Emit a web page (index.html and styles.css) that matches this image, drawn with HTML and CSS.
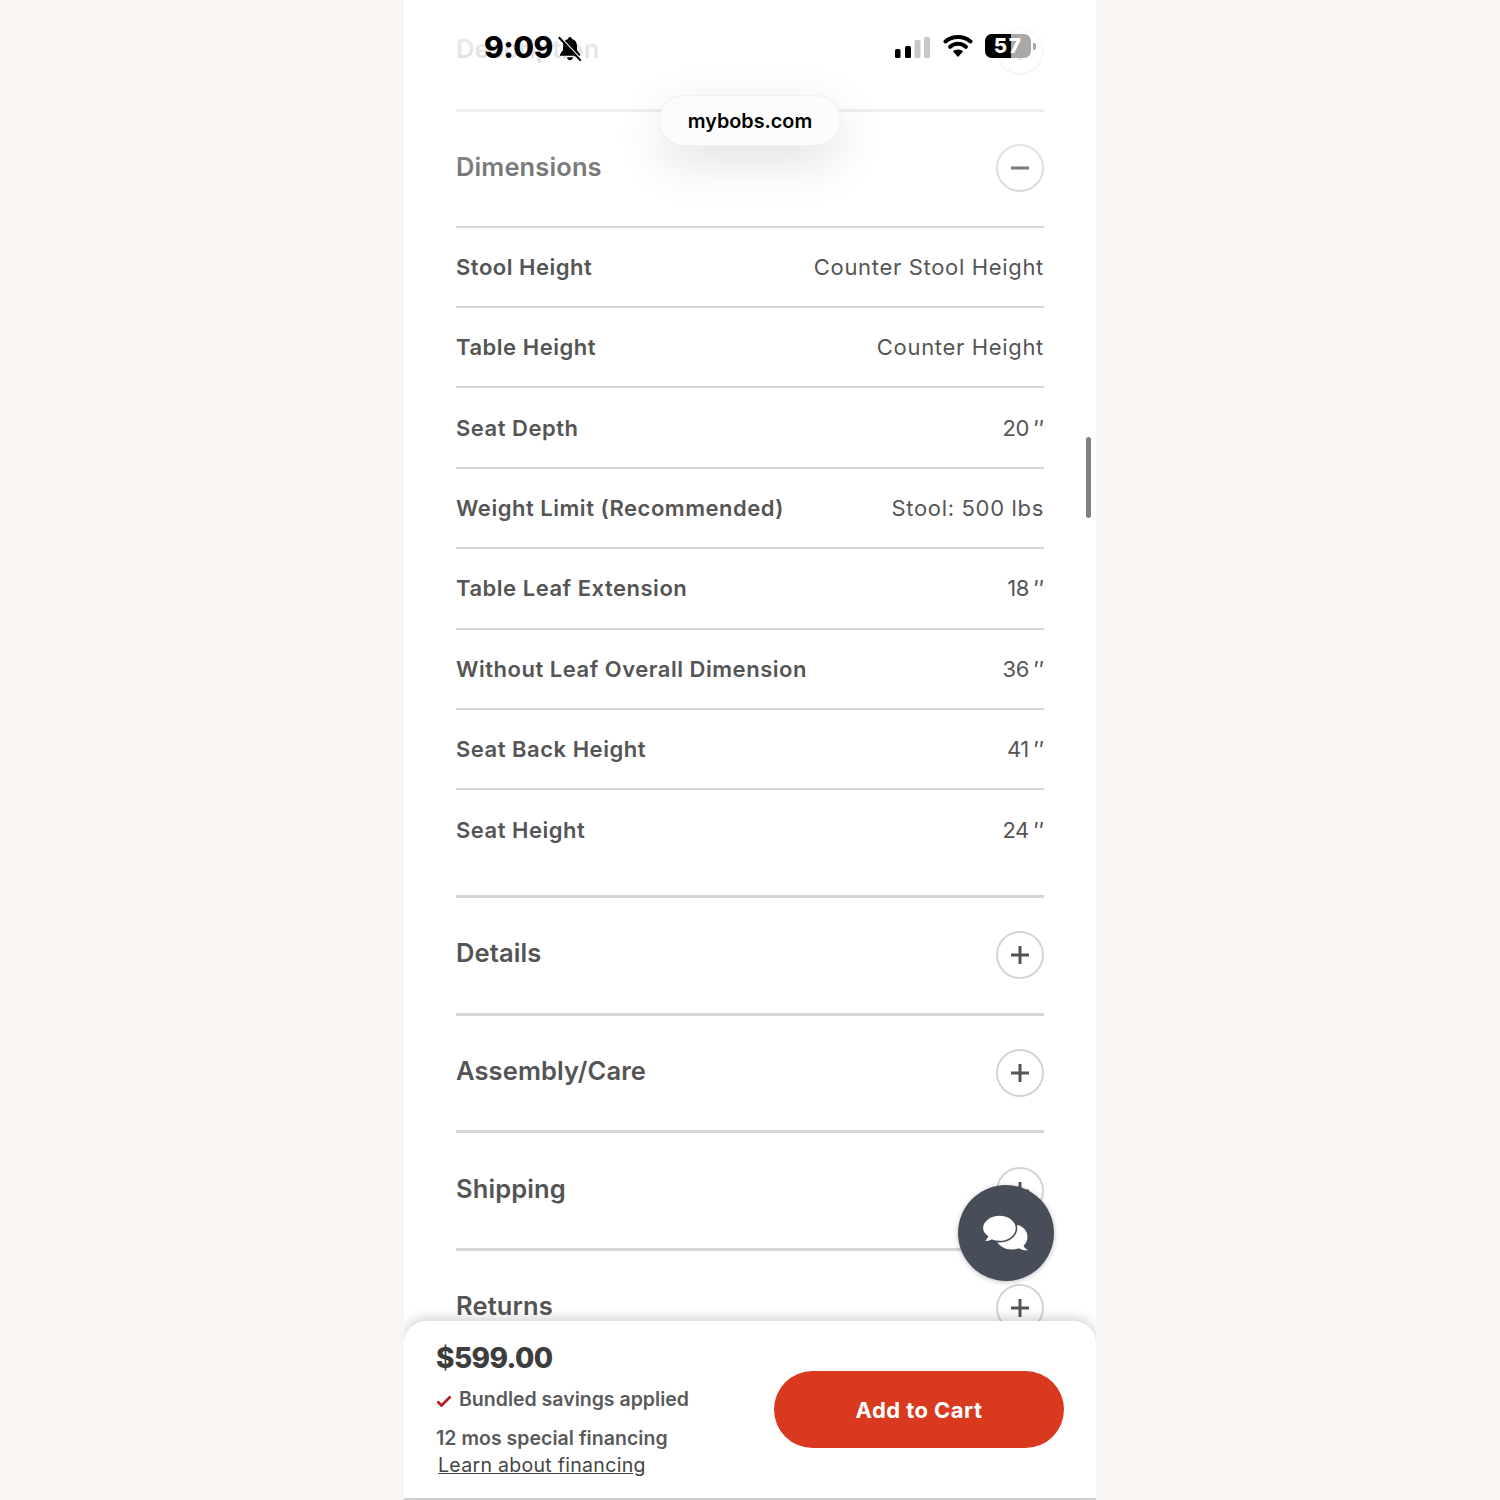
FILE: index.html
```html
<!DOCTYPE html>
<html lang="en">
<head>
<meta charset="utf-8">
<title>mybobs.com</title>
<link rel="stylesheet" href="styles.css">
</head>
<body>
<div class="phone">
  <main class="content">
    <section class="acc">
      <h2>Description</h2>
      <span class="circle"><svg viewBox="0 0 20 20"><path d="M10 1v18M1 10h18"/></svg></span>
    </section>
    <section class="acc open">
      <div class="acc-head">
        <h2>Dimensions</h2>
        <span class="circle"><svg viewBox="0 0 20 20"><path d="M1 10h18"/></svg></span>
      </div>
      <dl class="specs">
        <div class="spec"><dt>Stool Height</dt><dd>Counter Stool Height</dd></div>
        <div class="spec"><dt>Table Height</dt><dd>Counter Height</dd></div>
        <div class="spec"><dt>Seat Depth</dt><dd class="num">20<span class="q">''</span></dd></div>
        <div class="spec"><dt>Weight Limit (Recommended)</dt><dd>Stool: 500 lbs</dd></div>
        <div class="spec"><dt>Table Leaf Extension</dt><dd class="num">18<span class="q">''</span></dd></div>
        <div class="spec"><dt>Without Leaf Overall Dimension</dt><dd class="num">36<span class="q">''</span></dd></div>
        <div class="spec"><dt>Seat Back Height</dt><dd class="num">41<span class="q">''</span></dd></div>
        <div class="spec"><dt>Seat Height</dt><dd class="num">24<span class="q">''</span></dd></div>
      </dl>
    </section>
    <section class="acc">
      <h2>Details</h2>
      <span class="circle"><svg viewBox="0 0 20 20"><path d="M10 1v18M1 10h18"/></svg></span>
    </section>
    <section class="acc">
      <h2>Assembly/Care</h2>
      <span class="circle"><svg viewBox="0 0 20 20"><path d="M10 1v18M1 10h18"/></svg></span>
    </section>
    <section class="acc">
      <h2>Shipping</h2>
      <span class="circle"><svg viewBox="0 0 20 20"><path d="M10 1v18M1 10h18"/></svg></span>
    </section>
    <section class="acc">
      <h2>Returns</h2>
      <span class="circle"><svg viewBox="0 0 20 20"><path d="M10 1v18M1 10h18"/></svg></span>
    </section>
  </main>

  <div class="fade"></div>
  <div class="scrollbar"></div>

  <div class="status">
    <div class="status-left">
      <span class="time">9:09</span>
      <svg class="bell" viewBox="0 0 24 25">
        <path d="M12 1c1.100 0 1.900.8 1.900 1.900 3.500.9 5.100 3.600 5.100 7.300v3.900l3 4.100v1.600H2v-1.600l3-4.100v-3.900c0-3.700 1.600-6.400 5.100-7.300C10.100 1.800 10.900 1 12 1z"/>
        <path d="M9 21.300h6c-.2 1.700-1.400 2.900-3 2.900s-2.800-1.200-3-2.900z"/>
        <path class="bell-gap" d="M1.500 .5l22 23.500"/>
        <path class="bell-slash" d="M.8 1.200l22 23.500"/>
      </svg>
    </div>
    <div class="status-right">
      <svg class="signal" viewBox="0 0 35 21">
        <rect x="0" y="12" width="5.500" height="9" rx="1.500" fill="#000"/>
        <rect x="10" y="9" width="6" height="12" rx="1.500" fill="#000"/>
        <rect x="19.500" y="3" width="6" height="18" rx="1.500" fill="#c8c8c8"/>
        <rect x="29" y="0" width="6" height="21" rx="1.500" fill="#c8c8c8"/>
      </svg>
      <svg class="wifi" viewBox="0 0 30 22">
        <path d="M15 14.500c-2 0-3.700.7-5 1.900L15 22l5-5.600c-1.300-1.200-3-1.900-5-1.900z" fill="#000"/>
        <path d="M7.200 11.800c4.400-4 11.200-4 15.600 0M2.500 6.500c7-6 18-6 25 0" fill="none" stroke="#000" stroke-width="4" stroke-linecap="round"/>
      </svg>
      <div class="battery">
        <div class="battery-body"><span class="battery-fill"></span><span class="battery-num">57</span></div>
        <span class="battery-nub"></span>
      </div>
    </div>
  </div>

  <div class="url">mybobs.com</div>

  <button class="chat" aria-label="Chat">
    <svg viewBox="0 0 48 48">
      <path class="bubble-back" d="M36 16c6 2 9.500 6.500 9.500 12 0 3.500-1.500 6.500-4 8.800.8 1.800 2.200 3.200 4.800 4.400-3.800.3-7-.5-9.500-2-2 .8-4.200 1.200-6.800 1.200-7 0-12.500-3.400-15-8z"/>
      <path class="bubble-front" d="M17.500 6c9.200 0 17 5.800 17 13.300s-7.800 13.300-17 13.300c-2.800 0-5.300-.5-7.600-1.400-2.600 1.400-5.600 1.900-9.300 1.500 2.400-1.300 4-3 4.800-5.200C2.200 25.200.3 22.300.3 19.300.3 11.800 8.300 6 17.500 6z"/>
    </svg>
  </button>

  <aside class="cartbar">
    <div class="cart-info">
      <div class="price">$599.00</div>
      <div class="bundled">
        <svg class="check" viewBox="0 0 16 12"><path d="M1.500 6.500l4 4L14.500 1.500"/></svg>
        <span>Bundled savings applied</span>
      </div>
      <div class="fin">12 mos special financing</div>
      <a class="learn" href="#">Learn about financing</a>
    </div>
    <button class="add">Add to Cart</button>
  </aside>
</div>
</body>
</html>
```
FILE: styles.css
```css
* { box-sizing: border-box; }
html, body { margin: 0; padding: 0; }
body {
  background: #f9f5f2;
  display: flex;
  justify-content: center;
  font-family: "Inter", "Liberation Sans", sans-serif;
}
.phone {
  position: relative;
  width: 692px;
  height: 1500px;
  overflow: hidden;
  background: #fff;
  color: #555;
}
.content { padding: 0 52px; margin-top: -6px; }
.acc {
  display: flex;
  justify-content: space-between;
  align-items: center;
  height: 117.600px;
  border-bottom: 3px solid #d6d6d6;
}
.acc h2 {
  margin: 0 0 5px;
  font-size: 25.500px;
  font-weight: 600;
  letter-spacing: .12px;
  color: #555;
}
.acc.open { display: block; height: auto; padding-bottom: 24px; }
.acc-head {
  display: flex;
  justify-content: space-between;
  align-items: center;
  height: 116px;
  border-bottom: 2px solid #d6d6d6;
}
.acc-head .circle { margin-top: -2px; }
.circle {
  flex: none;
  width: 48px;
  height: 48px;
  border: 2px solid #d4d4d4;
  border-radius: 50%;
  background: #fff;
  display: flex;
  align-items: center;
  justify-content: center;
}
.circle svg { width: 20px; height: 20px; }
.circle path { fill: none; stroke: #555; stroke-width: 3; }
.specs { margin: 0; }
.spec {
  display: flex;
  justify-content: space-between;
  align-items: center;
  height: 80.400px;
  border-bottom: 2px solid #d6d6d6;
  font-size: 22px;
}
.spec:last-child { border-bottom: 0; height: 80.800px; padding-bottom: 2px; }
.spec dt { font-weight: 600; color: #555; letter-spacing: .52px; }
.spec dd { margin: 0; font-weight: 400; color: #555; letter-spacing: .67px; }
.spec .num { letter-spacing: -.5px; }
.q { font-style: italic; letter-spacing: -1.500px; margin-left: 3px; margin-right: 2px; }
.fade {
  position: absolute;
  left: 0;
  right: 0;
  top: 0;
  height: 235px;
  background: linear-gradient(to bottom,
    rgba(255,255,255,.96) 0,
    rgba(255,255,255,.85) 50px,
    rgba(255,255,255,.62) 110px,
    rgba(255,255,255,.22) 167px,
    rgba(255,255,255,0) 235px);
}
.scrollbar {
  position: absolute;
  left: 682px;
  top: 437px;
  width: 5px;
  height: 81px;
  border-radius: 3px;
  background: #808080;
}
.status {
  position: absolute;
  left: 80px;
  right: 60px;
  top: 31px;
  height: 34px;
  display: flex;
  justify-content: space-between;
  align-items: center;
  color: #000;
}
.status-left { display: flex; align-items: center; gap: 5px; }
.time { font-size: 30px; font-weight: 800; line-height: 34px; letter-spacing: -.6px; margin-top: -2px; }
.bell { width: 24px; height: 25px; fill: #000; }
.bell-gap { fill: none; stroke: #fff; stroke-width: 2; }
.bell-slash { fill: none; stroke: #000; stroke-width: 2; }
.status-right { display: flex; align-items: center; }
.signal { width: 35px; height: 21px; margin-right: 13px; margin-top: -2px; }
.wifi { width: 30px; height: 22px; margin-right: 12px; margin-top: -4px; }
.battery { display: flex; align-items: center; gap: 2px; margin-top: -4px; }
.battery-body {
  position: relative;
  width: 46px;
  height: 24px;
  border-radius: 7px;
  overflow: hidden;
  background: #a8a8a8;
  display: flex;
  align-items: center;
  justify-content: center;
}
.battery-fill { position: absolute; left: 0; top: 0; bottom: 0; width: 26px; background: #000; }
.battery-num { position: relative; color: #fff; font-size: 20.500px; font-weight: 800; line-height: 24px; letter-spacing: 1.500px; }
.battery-nub { width: 3px; height: 7px; border-radius: 0 2px 2px 0; background: #a8a8a8; }
.url {
  position: absolute;
  left: 255px;
  top: 95px;
  width: 182px;
  height: 51px;
  display: flex;
  align-items: center;
  justify-content: center;
  background: #fcfcfc;
  border: 1px solid #f0f0f0;
  border-radius: 26px;
  color: #000;
  font-size: 19.800px;
  font-weight: 600;
  box-shadow: 0 16px 50px rgba(0,0,0,.12);
}
.chat {
  position: absolute;
  left: 554px;
  top: 1185px;
  width: 96px;
  height: 96px;
  border: 0;
  padding: 0;
  border-radius: 50%;
  background: #484e59;
  box-shadow: 0 1px 5px rgba(0,0,0,.25);
  display: flex;
  align-items: center;
  justify-content: center;
}
.chat svg { width: 48px; height: 48px; }
.bubble-back { fill: #fff; }
.bubble-front { fill: #fff; stroke: #484e59; stroke-width: 1.600; }
.cartbar {
  position: absolute;
  left: 0;
  right: 0;
  bottom: 2px;
  height: 177px;
  background: #fff;
  border-radius: 22px 22px 0 0;
  box-shadow: 0 -3px 12px rgba(0,0,0,.18), 0 2px 0 #d8d8d8;
  padding: 0 32px;
  display: flex;
  justify-content: space-between;
  align-items: center;
}
.cart-info { display: flex; flex-direction: column; align-items: flex-start; margin-top: -1px; }
.price { font-size: 28px; font-weight: 800; color: #3d3d3d; line-height: 34px; margin-top: 2px; letter-spacing: -.6px; }
.bundled { display: flex; align-items: center; gap: 7px; margin-top: 10px; font-size: 19.500px; font-weight: 600; line-height: 28px; color: #5a5a5a; }
.check { width: 16px; height: 12px; margin-top: 3px; }
.check path { fill: none; stroke: #b32127; stroke-width: 2.800; }
.fin { margin-top: 11px; font-size: 19.500px; font-weight: 600; line-height: 28px; color: #5a5a5a; letter-spacing: .03px; }
.learn { margin: -1px 0 0 2px; font-size: 19.500px; line-height: 28px; color: #444; letter-spacing: .3px; text-decoration: underline; }
.add {
  width: 290px;
  height: 77px;
  margin-top: -1px;
  border: 0;
  border-radius: 39px;
  background: #d93a1f;
  color: #fff;
  font-family: inherit;
  font-size: 22px;
  font-weight: 700;
  letter-spacing: .45px;
  padding-top: 2px;
}
```
